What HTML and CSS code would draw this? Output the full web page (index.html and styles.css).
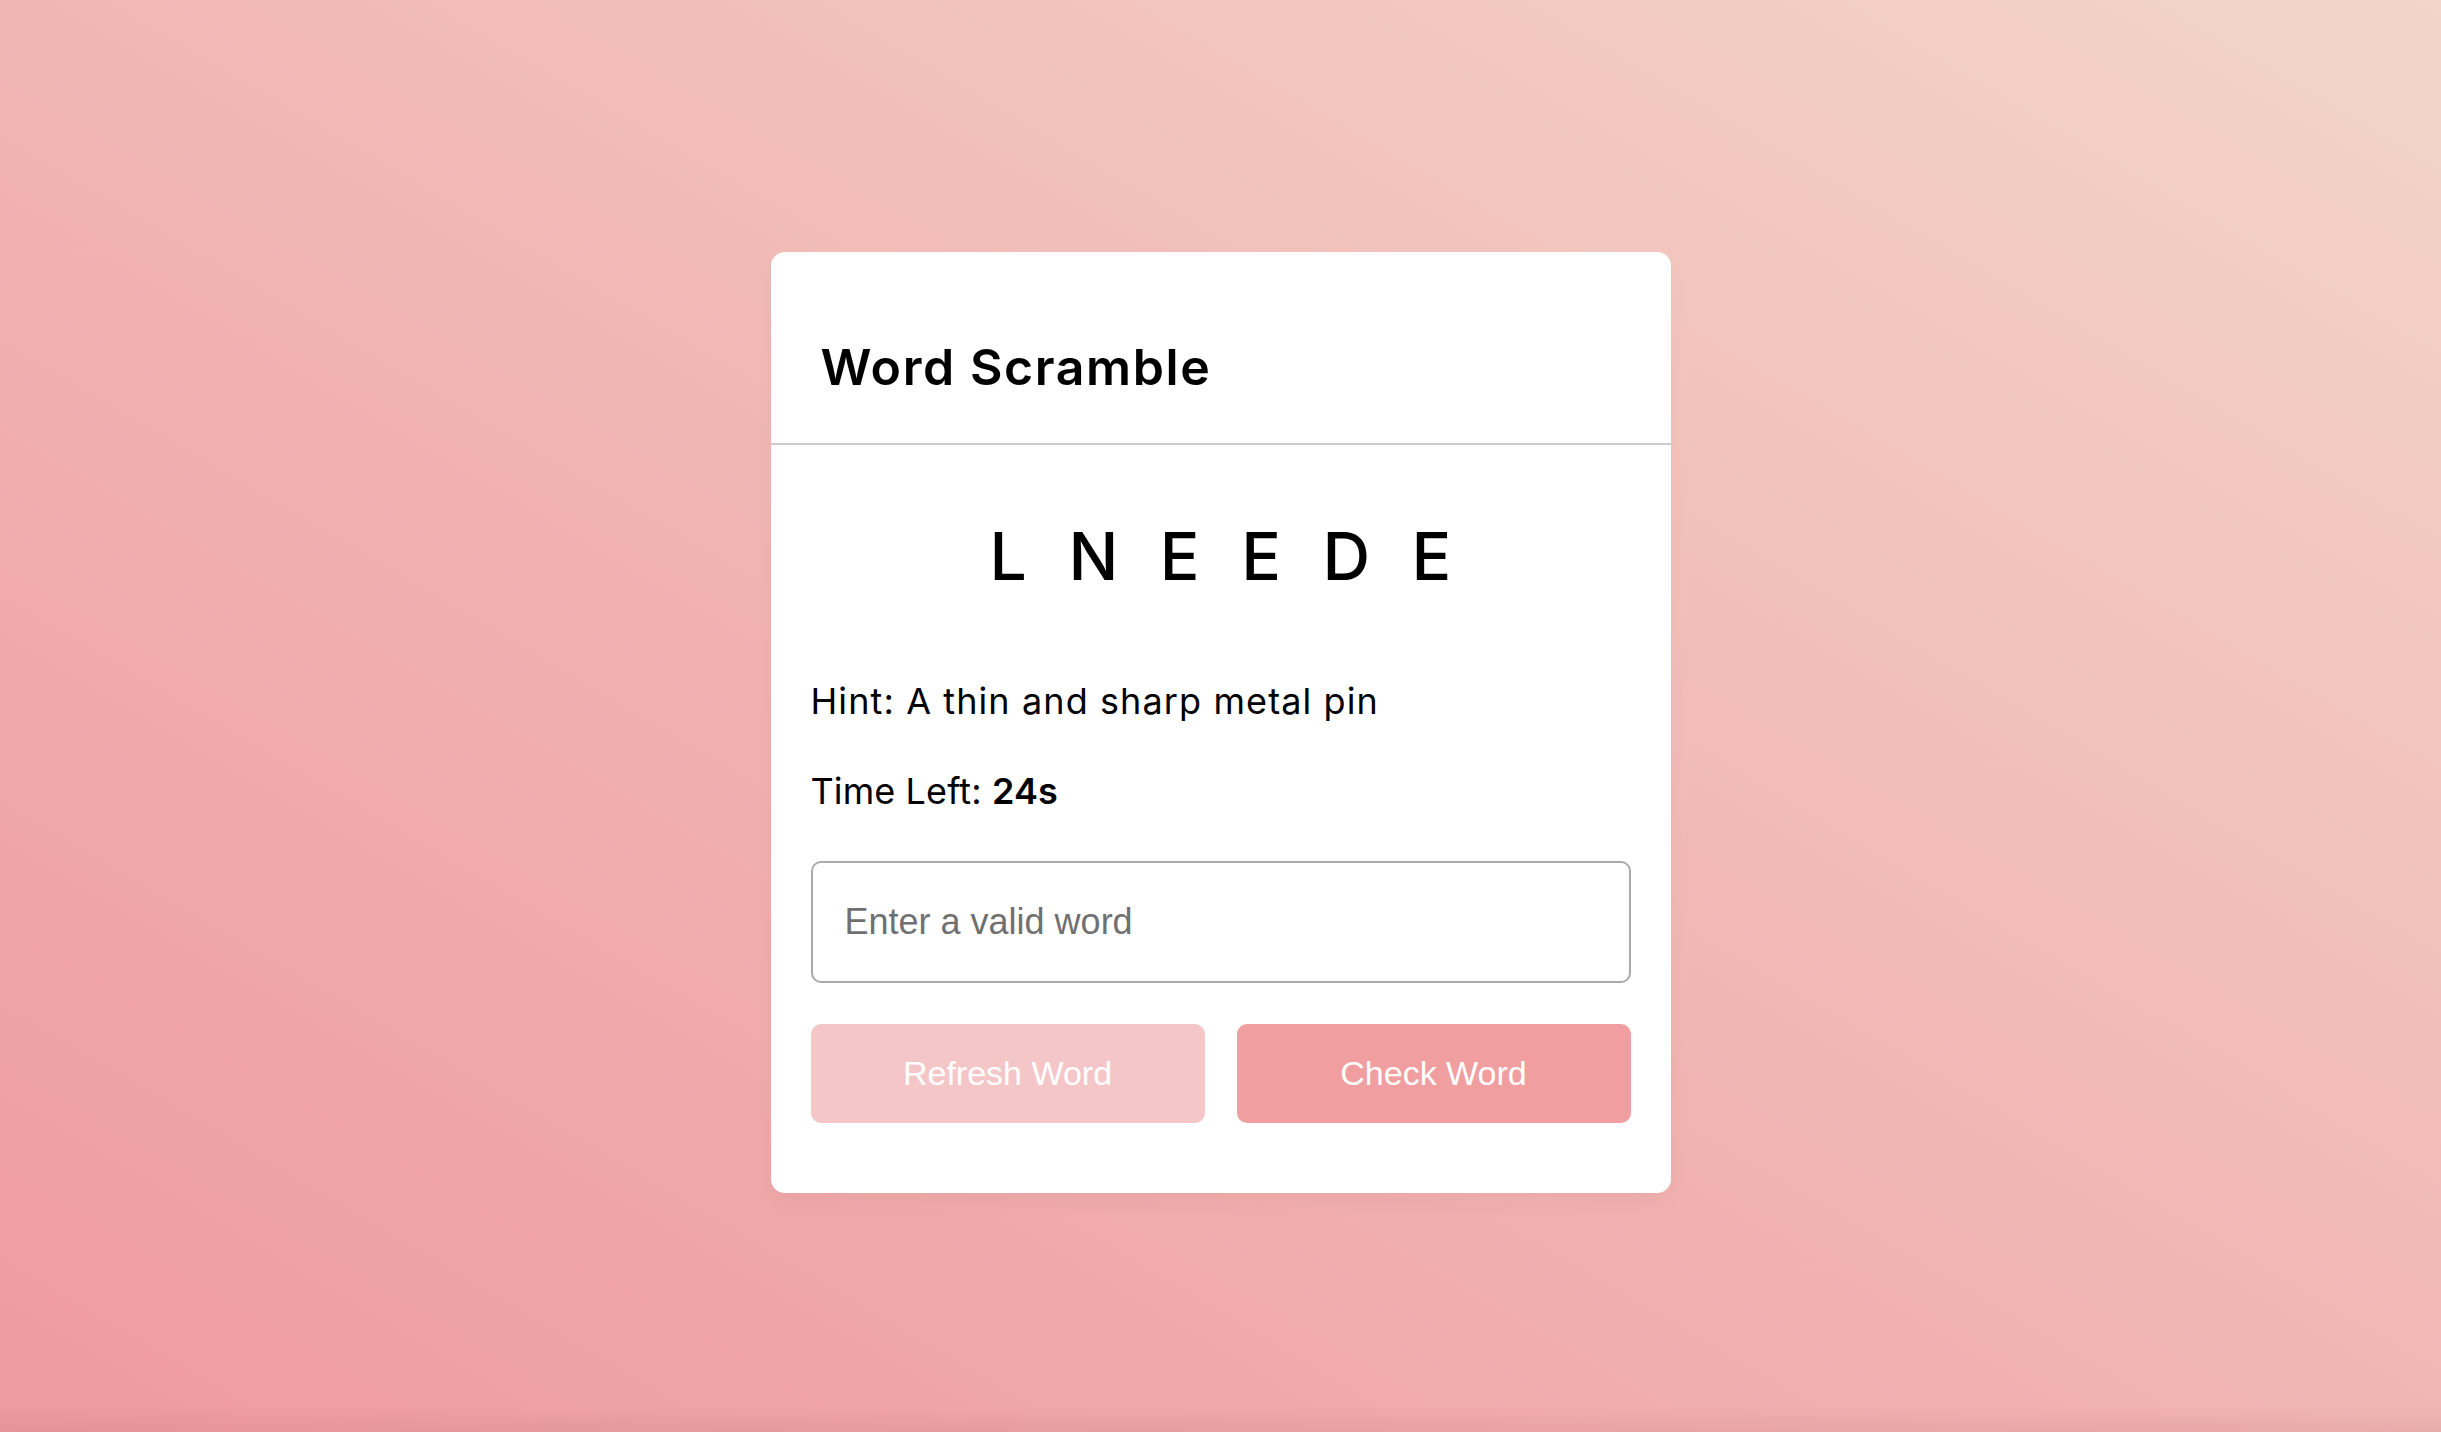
FILE: index.html
```html
<!DOCTYPE html>
<html lang="en">
<head>
<meta charset="utf-8">
<title>Word Scramble</title>
<link rel="stylesheet" href="styles.css">
</head>
<body>
  <div class="container">
    <h2 class="title">Word Scramble</h2>
    <div class="content">
      <p class="word">lneede</p>
      <div class="details">
        <p class="hint">Hint: <span>A thin and sharp metal pin</span></p>
        <p class="time">Time Left: <b>24s</b></p>
      </div>
      <input class="guess" type="text" spellcheck="false" placeholder="Enter a valid word">
      <div class="buttons">
        <button class="btn refresh-word">Refresh Word</button>
        <button class="btn check-word">Check Word</button>
      </div>
    </div>
  </div>
</body>
</html>
```
FILE: styles.css
```css
* {
  box-sizing: border-box;
  margin: 0;
  padding: 0;
}

html, body {
  height: 100%;
}

body {
  display: flex;
  align-items: center;
  justify-content: center;
  min-height: 100vh;
  padding-top: 12px;
  background: linear-gradient(to top right, #ee9a9e 0%, #f1b6b3 50%, #f3d5c9 100%);
  font-family: "Inter", "Noto Sans", sans-serif;
  color: #000;
  overflow: hidden;
}

body::after {
  content: "";
  position: fixed;
  left: 0;
  right: 0;
  bottom: 0;
  height: 24px;
  background: linear-gradient(to bottom, rgba(150, 80, 80, 0), rgba(150, 80, 80, 0.10));
  pointer-events: none;
}

.container {
  width: 900px;
  background: #fff;
  border-radius: 14px;
  box-shadow: 0 10px 20px rgba(0, 0, 0, 0.03);
}

.title {
  font-size: 50px;
  font-weight: 600;
  line-height: 60px;
  padding: 85px 50px 46px;
  border-bottom: 2px solid #cccccc;
  letter-spacing: 1.6px;
}

.content {
  padding: 62px 40px 70px;
}

.word {
  font-size: 66px;
  font-weight: 500;
  line-height: 99px;
  text-align: center;
  text-transform: uppercase;
  letter-spacing: 41.5px;
  margin-right: -41.5px;
  user-select: none;
}

.details {
  margin-top: 68px;
  display: flex;
  flex-direction: column;
  gap: 36px;
}

.details p {
  font-size: 36px;
  line-height: 54px;
  letter-spacing: 1.1px;
}

.details .time {
  letter-spacing: 0.1px;
}

.details b {
  font-weight: 600;
}

.guess {
  display: block;
  width: 100%;
  height: 122px;
  margin-top: 43px;
  padding: 0 32px;
  border: 2px solid #aaaaaa;
  border-radius: 10px;
  outline: none;
  font-family: "Liberation Sans", Arial, sans-serif;
  font-size: 36px;
  color: #000;
  background: #fff;
}

.guess::placeholder {
  color: #707070;
}

.buttons {
  display: flex;
  justify-content: space-between;
  margin-top: 41px;
}

.btn {
  width: calc(50% - 16px);
  height: 99px;
  border: none;
  border-radius: 10px;
  color: #fff;
  font-family: "Liberation Sans", Arial, sans-serif;
  font-size: 34px;
  cursor: pointer;
}

.refresh-word {
  background: #f5c6c7;
}

.check-word {
  background: #f09ea0;
}
```
